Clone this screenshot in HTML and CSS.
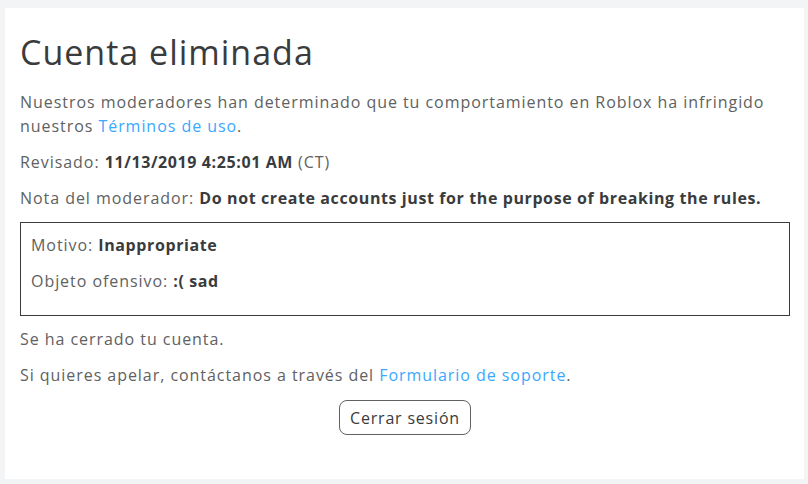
FILE: index.html
```html
<!DOCTYPE html>
<html>
<head>
    <link rel="stylesheet" href="styles.css">
    <title>Cuenta eliminada</title>
</head>
<body>
    <div class="card">
        <h1 class="title">Cuenta eliminada</h1>
        <p>Nuestros moderadores han determinado que tu comportamiento en Roblox ha infringido<br>
            nuestros <a href="#">Términos de uso</a>.</p>
        <p>Revisado: <strong>11/13/2019 4:25:01 AM</strong> (CT)</p>
        <p>Nota del moderador: <strong>Do not create accounts just for the purpose of breaking the rules.</strong></p>

        <div class="offense">
            <p>Motivo: <strong>Inappropriate</strong></p>
            <p>Objeto ofensivo: <strong>:( sad</strong></p>
        </div>

        <p>Se ha cerrado tu cuenta.</p>
        <p>Si quieres apelar, contáctanos a través del <a href="#">Formulario de soporte</a>.</p>

        <div class="actions">
            <button class="btn" type="button">Cerrar sesión</button>
        </div>
    </div>
</body>
</html>
```

FILE: styles.css
```css
body {
    margin: 0;
    padding: 8px 4px 5px 5px;
    background-color: #f2f4f5;
    font-family: "Open Sans", "DejaVu Sans", sans-serif;
    color: #606162;
    font-size: 16px;
}

.card {
    background-color: #ffffff;
    padding: 20px 14px 20px 15px;
    box-sizing: border-box;
    height: 471px;
}

.title {
    font-size: 34px;
    font-weight: 400;
    letter-spacing: 1px;
    color: #393b3d;
    line-height: 40px;
    margin: 4px 0 18px;
}

p {
    line-height: 24px;
    letter-spacing: 0.95px;
    margin: 0 0 12px;
}

strong {
    font-weight: 700;
    letter-spacing: 0.6px;
    color: #393b3d;
}

a {
    color: #3aa8ff;
    text-decoration: none;
}

.offense {
    border: 1px solid #393b3d;
    padding: 10px 10px 10px;
    margin-bottom: 11px;
}

.actions {
    display: flex;
    justify-content: center;
    padding-top: 1px;
}

.btn {
    font-family: inherit;
    font-size: 16px;
    font-weight: 500;
    letter-spacing: 0.8px;
    color: #393b3d;
    background-color: #ffffff;
    border: 1px solid #606162;
    border-radius: 8px;
    padding: 0 10px;
    height: 35px;
}
```
